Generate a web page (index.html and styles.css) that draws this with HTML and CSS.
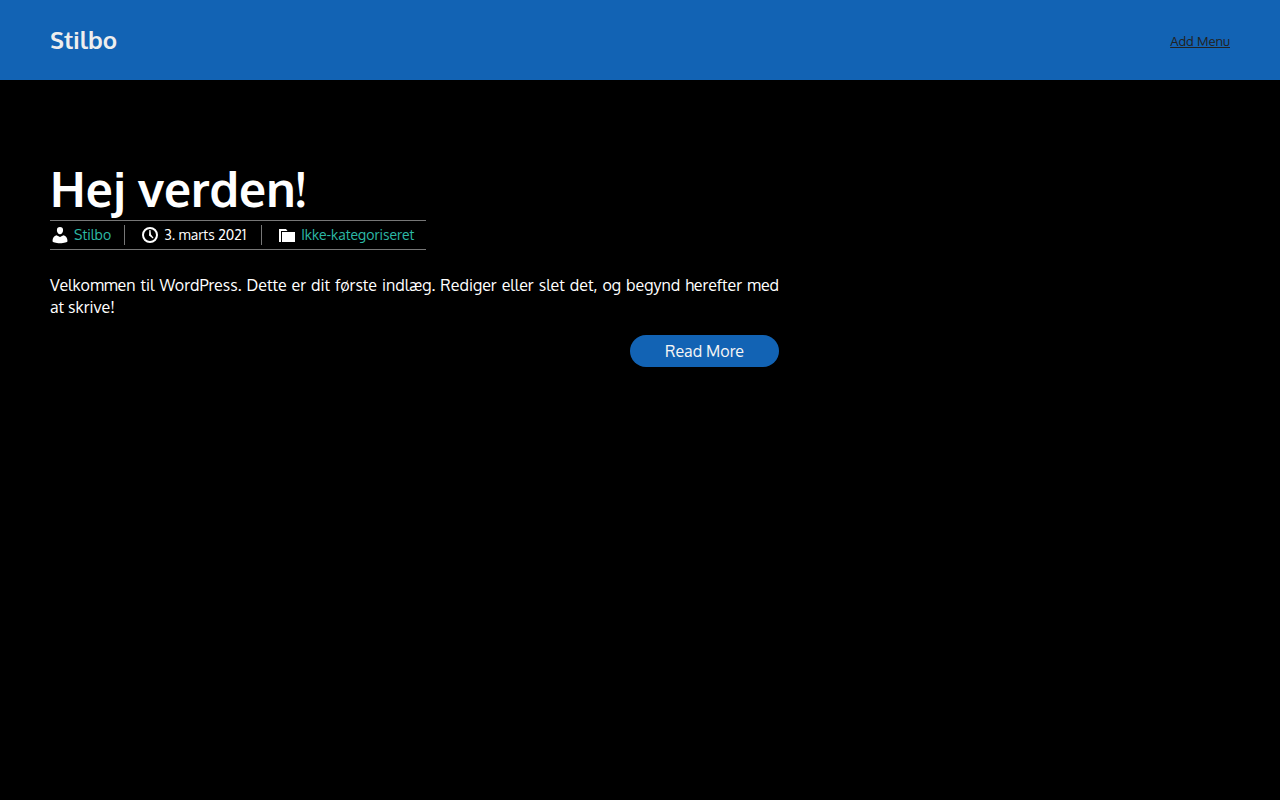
FILE: index.html
```html
<!DOCTYPE html>
<html lang="da">
<head>
<meta charset="utf-8">
<meta name="viewport" content="width=device-width, initial-scale=1">
<title>Stilbo</title>
<link rel="stylesheet" href="styles.css">
</head>
<body>
<header class="site-header">
  <a class="site-title" href="#">Stilbo</a>
  <nav><a class="add-menu" href="#">Add Menu</a></nav>
</header>
<main class="content">
  <article class="post">
    <h1 class="post-title">Hej verden!</h1>
    <div class="meta">
      <span class="meta-item">
        <svg class="icon" viewBox="0 0 20 20" aria-hidden="true"><path d="M10 9.300c-1.700 0-3.100-1.900-3.100-4.100C6.900 3 8 2 10 2s3.100 1 3.100 3.200c0 2.200-1.400 4.100-3.100 4.100zM13.500 10.300c2.500.8 4 2.800 4 6 0 .9-3.300 2-7.500 2s-7.500-1.100-7.500-2c0-3.200 1.500-5.200 4-6L10 12z"/></svg>
        <a class="meta-link" href="#">Stilbo</a>
      </span>
      <span class="meta-item">
        <svg class="icon" viewBox="0 0 20 20" aria-hidden="true"><path fill-rule="evenodd" d="M10 2a8 8 0 1 1 0 16 8 8 0 0 1 0-16zm0 2a6 6 0 1 0 0 12 6 6 0 0 0 0-12z"/><path d="M9.300 5h1.200l.5 4.600 2.500 3.200-.6.700L9 10.500z"/></svg>
        <time class="meta-date" datetime="2021-03-03">3. marts 2021</time>
      </span>
      <span class="meta-item">
        <svg class="icon" viewBox="0 0 20 20" aria-hidden="true"><path d="M2 4h7l1.500 2H4v11H2zM5 7h13v10H5z"/></svg>
        <a class="meta-link" href="#">Ikke-kategoriseret</a>
      </span>
    </div>
    <p class="excerpt">Velkommen til WordPress. Dette er dit første indlæg. Rediger eller slet det, og begynd herefter med at skrive!</p>
    <a class="read-more" href="#">Read More</a>
  </article>
</main>
</body>
</html>
```
FILE: styles.css
```css
* { box-sizing: border-box; }
body {
  margin: 0;
  background: #000;
  color: #fff;
  font-family: Oxygen, "Noto Sans", sans-serif;
  font-size: 16px;
  line-height: 22px;
}
.site-header {
  display: flex;
  align-items: center;
  justify-content: space-between;
  min-height: 80px;
  padding: 0 50px;
  background: #1263b4;
}
.site-title {
  color: #eee;
  font-size: 24px;
  font-weight: 600;
  line-height: 32px;
  text-decoration: none;
}
.add-menu {
  color: #222;
  font-size: 13px;
}
.content { padding: 80px 50px; }
.post {
  display: flex;
  flex-direction: column;
  align-items: flex-start;
  width: 62%;
  max-width: 729px;
}
.post-title {
  margin: 0 0 4px;
  font-size: 48px;
  font-weight: 600;
  line-height: 56px;
}
.meta {
  display: flex;
  padding: 4px 12px 4px 0;
  border-top: 1px solid #777;
  border-bottom: 1px solid #777;
  font-size: 14px;
  line-height: 20px;
}
.meta-item {
  display: flex;
  gap: 4px;
}
.meta-item + .meta-item {
  margin-left: 13px;
  padding-left: 15px;
  border-left: 1px solid #777;
}
.icon {
  width: 20px;
  height: 20px;
  fill: #fff;
}
.meta-date { min-width: 84px; }
.meta-link {
  color: #2cb8a5;
  text-decoration: none;
}
.excerpt {
  margin: 24px 0 17px;
  text-align: justify;
}
.read-more {
  align-self: flex-end;
  padding: 5px 35px;
  border-radius: 16px;
  background: #1263b4;
  color: #f5f5f5;
  text-decoration: none;
}
```
